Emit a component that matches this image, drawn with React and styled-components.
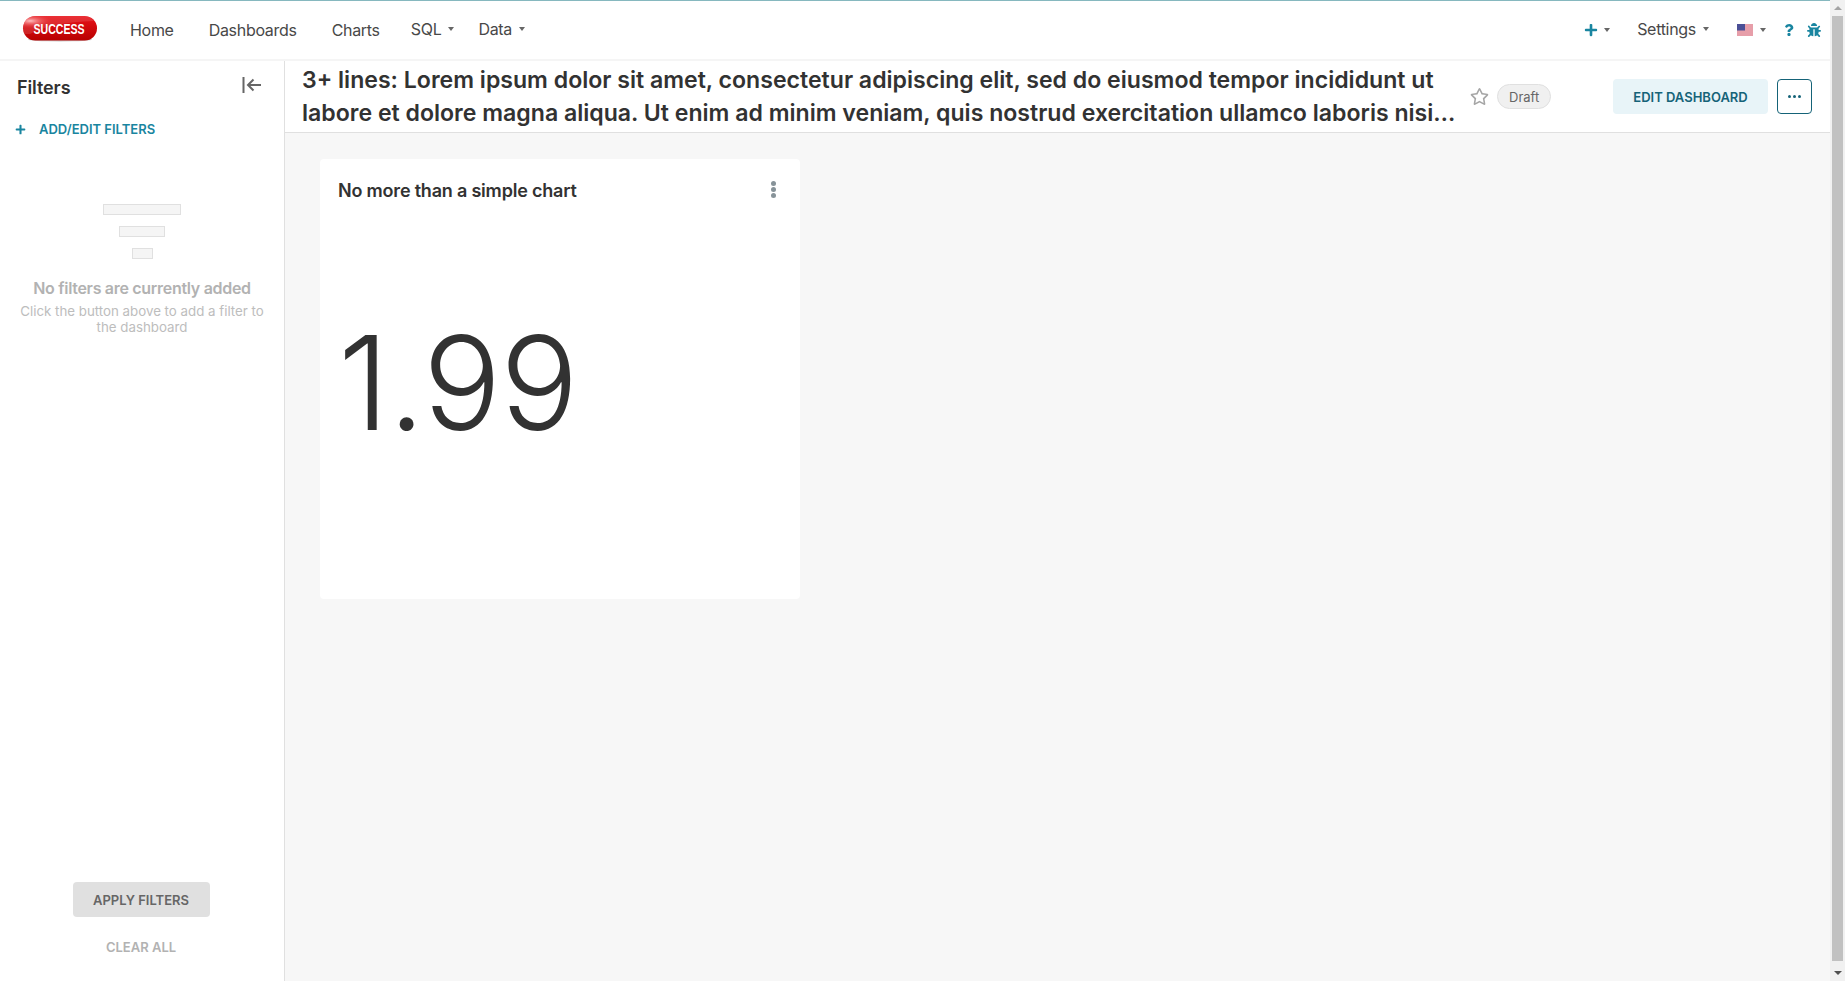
import React from 'react';
import styled, { createGlobalStyle } from 'styled-components';
import { FaPlus, FaQuestion, FaBug, FaRegStar } from 'react-icons/fa';

const GlobalStyle = createGlobalStyle`
  html, body { height: 100%; overflow: hidden; }
  body {
    margin: 0;
    font-family: Inter, "Liberation Sans", sans-serif;
    background: #fff;
    color: #323232;
  }
  * { box-sizing: border-box; }
`;

const Shell = styled.div`
  display: flex;
  height: 100vh;
`;

const Page = styled.div`
  flex: 1;
  min-width: 0;
  display: flex;
  flex-direction: column;
`;

// the browser's own scrollbar, visible in the reference
const ScrollRail = styled.div`
  width: 15px;
  flex: none;
  display: flex;
  flex-direction: column;
  background: #f1f1f1;
`;

const ScrollButton = styled.div`
  height: 16px;
  flex: none;
  display: flex;
  align-items: center;
  justify-content: center;
  &::after {
    content: '';
    width: 0;
    height: 0;
    border-left: 4px solid transparent;
    border-right: 4px solid transparent;
    ${p => (p.$down
      ? 'border-top: 4px solid #505050;'
      : 'border-bottom: 4px solid #a3a3a3;')}
  }
`;

const ScrollThumb = styled.div`
  flex: 1;
  margin: 0 2px 4px;
  background: #c1c1c1;
`;

const TopBar = styled.header`
  height: 61px;
  flex: none;
  display: flex;
  align-items: center;
  justify-content: space-between;
  border-top: 1px solid #86b8bf;
  border-bottom: 2px solid #f5f5f5;
  padding: 0 9px 0 22px;
`;

const NavLeft = styled.nav`
  display: flex;
  align-items: center;
`;

const LogoMark = styled.span`
  display: flex;
  margin-top: -3px;
`;

const NavItem = styled.a`
  display: flex;
  align-items: center;
  font-size: 16px;
  letter-spacing: -0.3px;
  line-height: 24px;
  color: #484848;
  margin-left: ${p => p.$gap}px;
  position: relative;
  top: ${p => (p.$menu ? -1 : 0)}px;
`;

const Caret = styled.span`
  display: inline-block;
  width: 0;
  height: 0;
  margin-left: ${p => p.$gap || 7}px;
  border-left: 3.5px solid transparent;
  border-right: 3.5px solid transparent;
  border-top: 4px solid #666;
`;

const NavRight = styled.div`
  display: flex;
  align-items: center;
  color: #1985a0;
`;

const IconSlot = styled.span`
  display: flex;
  align-items: center;
  margin-left: ${p => p.$gap || 0}px;
  color: #1985a0;
`;

const Body = styled.div`
  flex: 1;
  display: flex;
  min-height: 0;
`;

const Sidebar = styled.aside`
  width: 285px;
  flex: none;
  display: flex;
  flex-direction: column;
  border-right: 1px solid #e0e0e0;
  background: #fff;
`;

const SidebarHead = styled.div`
  display: flex;
  align-items: center;
  justify-content: space-between;
  padding: 12px 22px 0 17px;
  height: 41px;
`;

const SidebarTitle = styled.h3`
  margin: 0;
  font-size: 18px;
  letter-spacing: -0.1px;
  line-height: 24px;
  font-weight: 600;
  color: #323232;
`;

const CollapseSlot = styled.span`
  display: flex;
  margin-top: -5px;
`;

const AddFilters = styled.div`
  display: flex;
  align-items: center;
  gap: 13px;
  margin: 19px 0 0 15px;
  font-size: 13px;
  line-height: 16px;
  font-weight: 600;
  color: #1985a0;
`;

const EmptyState = styled.div`
  display: flex;
  flex-direction: column;
  align-items: center;
  margin-top: 67px;
  padding: 0 16px;
`;

const EmptyBar = styled.div`
  width: ${p => p.$w}px;
  height: 11px;
  margin-bottom: ${p => p.$mb}px;
  background: #f5f5f5;
  border: 1px solid #e0e0e0;
`;

const EmptyTitle = styled.div`
  margin-top: 19px;
  font-size: 16px;
  letter-spacing: -0.3px;
  line-height: 20px;
  font-weight: 600;
  color: #b2b2b2;
  text-align: center;
  white-space: nowrap;
`;

const EmptyText = styled.div`
  font-size: 13.3px;
  line-height: 16px;
  margin-top: 5px;
  color: #bdbdbd;
  text-align: center;
`;

const SidebarFoot = styled.div`
  margin-top: auto;
  display: flex;
  flex-direction: column;
  align-items: center;
  padding: 0 2px 26px 0;
`;

const ApplyButton = styled.button`
  width: 137px;
  height: 35px;
  border: none;
  border-radius: 4px;
  background: #e0e0e0;
  color: #666;
  font: 600 13px Inter, sans-serif;
`;

const ClearAll = styled.div`
  margin-top: 22px;
  font-size: 13px;
  line-height: 16px;
  font-weight: 600;
  color: #b2b2b2;
`;

const Main = styled.main`
  flex: 1;
  min-width: 0;
  display: flex;
  flex-direction: column;
  background: #f7f7f7;
`;

const TitleBar = styled.div`
  height: 72px;
  flex: none;
  display: flex;
  align-items: center;
  background: #fff;
  border-bottom: 1px solid #e0e0e0;
  padding: 0 18px 0 17px;
`;

const DashTitle = styled.h1`
  margin: 0;
  width: 1155px;
  flex: none;
  font-size: 23.1px;
  line-height: 33px;
  font-weight: 600;
  color: #323232;
  display: -webkit-box;
  -webkit-line-clamp: 2;
  -webkit-box-orient: vertical;
  overflow: hidden;
`;

const StarIcon = styled.span`
  display: flex;
  margin-left: 13px;
  color: #a6a6a6;
`;

const DraftTag = styled.span`
  margin-left: 8px;
  height: 25px;
  padding: 0 11px;
  display: flex;
  align-items: center;
  border-radius: 13px;
  border: 1px solid #e0e0e0;
  background: #f0f0f0;
  font-size: 13px;
  color: #666;
`;

const EditButton = styled.button`
  margin-left: auto;
  width: 155px;
  height: 35px;
  border: none;
  border-radius: 4px;
  background: #e8f4f8;
  color: #156378;
  font: 600 13px Inter, sans-serif;
`;

const MoreButton = styled.button`
  margin-left: 9px;
  width: 35px;
  height: 35px;
  border: 1px solid #156378;
  border-radius: 4px;
  background: #fff;
  display: flex;
  align-items: center;
  justify-content: center;
  gap: 2px;
  padding: 0;
`;

const MoreDot = styled.i`
  width: 3px;
  height: 3px;
  border-radius: 50%;
  background: #156378;
`;

const Grid = styled.div`
  padding: 26px 0 0 35px;
`;

const ChartCard = styled.section`
  width: 480px;
  height: 440px;
  background: #fff;
  border-radius: 4px;
  padding: 18px 18px 0;
`;

const CardHead = styled.div`
  display: flex;
  align-items: flex-start;
  justify-content: space-between;
`;

const CardTitle = styled.h2`
  margin: 0;
  font-size: 18px;
  letter-spacing: -0.2px;
  line-height: 24px;
  font-weight: 600;
  color: #323232;
  padding-top: 2px;
`;

const Kebab = styled.div`
  display: flex;
  flex-direction: column;
  gap: 1px;
  margin: 4px 6px 0 0;
`;

const KebabDot = styled.i`
  width: 5px;
  height: 5px;
  border-radius: 50%;
  background: #879399;
`;

const BigNumber = styled.div`
  margin-top: 101px;
  font-size: 130px;
  line-height: 158px;
  font-weight: 300;
  letter-spacing: -1px;
  color: #323232;
`;

const Logo = () => (
  <svg width="76" height="27" viewBox="0 0 76 27">
    <defs>
      <linearGradient id="pill" x1="0" y1="0" x2="0" y2="1">
        <stop offset="0" stopColor="#e8131a" />
        <stop offset="1" stopColor="#b80000" />
      </linearGradient>
      <radialGradient id="shine" cx="0.1" cy="0.2" r="0.3">
        <stop offset="0" stopColor="#ffb8b8" />
        <stop offset="1" stopColor="#e8131a" stopOpacity="0" />
      </radialGradient>
    </defs>
    <ellipse cx="38" cy="24.5" rx="32" ry="2" fill="#c9c9c9" />
    <rect x="1" y="1" width="74" height="24.5" rx="12.2" fill="url(#pill)" />
    <rect x="1" y="1" width="74" height="24.5" rx="12.2" fill="url(#shine)" />
    <path d="M8 19C22 11 44 7 72 6c-2-3-5-5-9-5H13C6 1 1 6 1 13c0 2 .5 4 1.5 6z" fill="#fff" opacity=".12" />
    <text x="37" y="18.5" textAnchor="middle" fontFamily="Liberation Sans" fontWeight="700" fontSize="14.5" textLength="51" lengthAdjust="spacingAndGlyphs" fill="#fff">SUCCESS</text>
  </svg>
);

const CollapseIcon = () => (
  <svg width="20" height="18" viewBox="0 0 20 18" fill="none" stroke="#666" strokeWidth="2">
    <path d="M1.5 1v16M19 9H6M11.5 3.5 6 9l5.5 5.5" />
  </svg>
);

const UsFlag = () => (
  <svg width="16" height="12" viewBox="0 0 16 12">
    <rect width="16" height="12" fill="#f4f4f8" />
    <path d="M0 1h16M0 3h16M0 5h16M0 7h16M0 9h16M0 11h16" stroke="#d9485a" strokeWidth="1" />
    <rect width="8" height="6.5" fill="#4a4f96" />
  </svg>
);

const EmptyIcon = () => (
  <>
    <EmptyBar $w={78} $mb={11} />
    <EmptyBar $w={46} $mb={11} />
    <EmptyBar $w={21} $mb={0} />
  </>
);

const App = () => (
  <Shell>
    <GlobalStyle />
    <Page>
      <TopBar>
        <NavLeft>
          <LogoMark><Logo /></LogoMark>
          <NavItem $gap={32}>Home</NavItem>
          <NavItem $gap={35}>Dashboards</NavItem>
          <NavItem $gap={35}>Charts</NavItem>
          <NavItem $gap={31} $menu>SQL<Caret /></NavItem>
          <NavItem $gap={24} $menu>Data<Caret /></NavItem>
        </NavLeft>
        <NavRight>
          <IconSlot><FaPlus size={14} /></IconSlot>
          <Caret $gap={6} />
          <NavItem $gap={27} $menu>Settings<Caret /></NavItem>
          <IconSlot $gap={28}><UsFlag /></IconSlot>
          <Caret $gap={7} />
          <IconSlot $gap={17}><FaQuestion size={12} /></IconSlot>
          <IconSlot $gap={12}><FaBug size={14} /></IconSlot>
        </NavRight>
      </TopBar>
      <Body>
        <Sidebar>
          <SidebarHead>
            <SidebarTitle>Filters</SidebarTitle>
            <CollapseSlot><CollapseIcon /></CollapseSlot>
          </SidebarHead>
          <AddFilters>
            <FaPlus size={11} />
            ADD/EDIT FILTERS
          </AddFilters>
          <EmptyState>
            <EmptyIcon />
            <EmptyTitle>No filters are currently added</EmptyTitle>
            <EmptyText>Click the button above to add a filter to the dashboard</EmptyText>
          </EmptyState>
          <SidebarFoot>
            <ApplyButton>APPLY FILTERS</ApplyButton>
            <ClearAll>CLEAR ALL</ClearAll>
          </SidebarFoot>
        </Sidebar>
        <Main>
          <TitleBar>
            <DashTitle>
              3+ lines: Lorem ipsum dolor sit amet, consectetur adipiscing elit, sed do eiusmod tempor incididunt ut labore et dolore magna aliqua. Ut enim ad minim veniam, quis nostrud exercitation ullamco laboris nisi ut aliquip ex ea commodo consequat.
            </DashTitle>
            <StarIcon><FaRegStar size={19} /></StarIcon>
            <DraftTag>Draft</DraftTag>
            <EditButton>EDIT DASHBOARD</EditButton>
            <MoreButton><MoreDot /><MoreDot /><MoreDot /></MoreButton>
          </TitleBar>
          <Grid>
            <ChartCard>
              <CardHead>
                <CardTitle>No more than a simple chart</CardTitle>
                <Kebab><KebabDot /><KebabDot /><KebabDot /></Kebab>
              </CardHead>
              <BigNumber>1.99</BigNumber>
            </ChartCard>
          </Grid>
        </Main>
      </Body>
    </Page>
    <ScrollRail>
      <ScrollButton />
      <ScrollThumb />
      <ScrollButton $down />
    </ScrollRail>
  </Shell>
);

export default App;
